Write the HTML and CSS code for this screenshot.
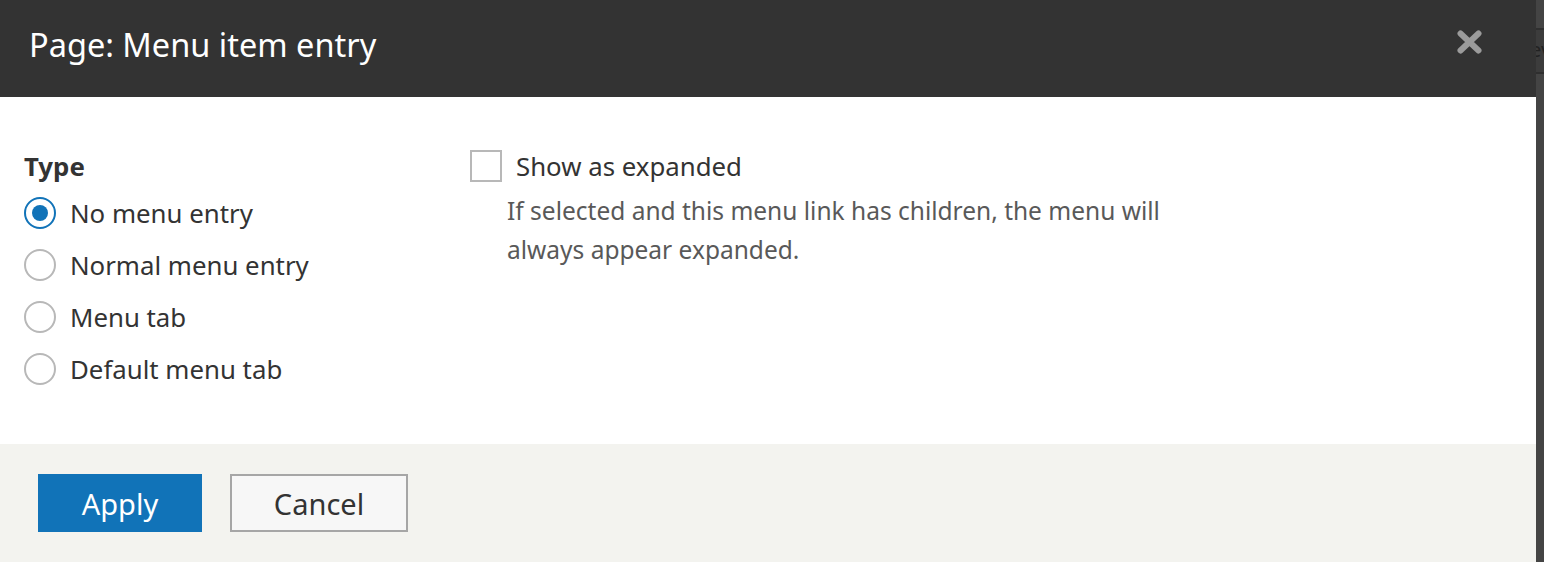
FILE: index.html
```html
<!DOCTYPE html>
<html lang="en">
<head>
<meta charset="utf-8">
<title>Page: Menu item entry</title>
<link rel="stylesheet" href="styles.css">
</head>
<body>
<div class="screen">
  <div class="dialog">
    <header class="dialog-header">
      <h1 class="dialog-title">Page: Menu item entry</h1>
      <button class="dialog-close" type="button" aria-label="Close">
        <svg width="25" height="24" viewBox="0 0 25 24"><path d="M3.5 3.5 L21.5 20.5 M21.5 3.5 L3.5 20.5" stroke="#9b9b9b" stroke-width="6" stroke-linecap="round"/></svg>
      </button>
    </header>
    <div class="dialog-body">
      <div class="col-type">
        <div class="field-label">Type</div>
        <label class="radio-row"><span class="radio checked"></span><span>No menu entry</span></label>
        <label class="radio-row"><span class="radio"></span><span>Normal menu entry</span></label>
        <label class="radio-row"><span class="radio"></span><span>Menu tab</span></label>
        <label class="radio-row"><span class="radio"></span><span>Default menu tab</span></label>
      </div>
      <div class="col-expand">
        <label class="check-row"><span class="checkbox"></span><span>Show as expanded</span></label>
        <div class="description">If selected and this menu link has children, the menu will<br>always appear expanded.</div>
      </div>
    </div>
    <footer class="dialog-footer">
      <button class="btn btn-primary" type="button">Apply</button>
      <button class="btn btn-secondary" type="button">Cancel</button>
    </footer>
  </div>
  <div class="side-strip">
    <div class="side-tab"><span class="side-text">ev</span></div>
  </div>
</div>
</body>
</html>
```
FILE: styles.css
```css
html, body {
  margin: 0;
  padding: 0;
  background: #444444;
}
body {
  font-family: "Noto Sans", "Open Sans", sans-serif;
  color: #333333;
}
.screen {
  display: flex;
  width: 1544px;
  height: 562px;
  overflow: hidden;
}
.dialog {
  width: 1536px;
  flex: none;
  display: flex;
  flex-direction: column;
  background: #ffffff;
}
.dialog-header {
  height: 97px;
  box-sizing: border-box;
  background: #333333;
  display: flex;
  align-items: flex-start;
  justify-content: space-between;
  padding: 23px 54px 0 29px;
}
.dialog-title {
  margin: 0;
  font-size: 32.5px;
  line-height: 44px;
  font-weight: 400;
  color: #ffffff;
}
.dialog-close {
  margin-top: 7px;
  padding: 0;
  border: 0;
  background: transparent;
  width: 25px;
  height: 24px;
  display: block;
}
.dialog-close svg { display: block; }
.dialog-body {
  flex: 1;
  display: flex;
  padding: 51px 0 0 24px;
  font-size: 25.8px;
}
.col-type {
  width: 446px;
  flex: none;
}
.field-label {
  font-weight: 700;
  line-height: 36px;
  margin-bottom: 3px;
}
.radio-row {
  display: flex;
  align-items: center;
  height: 52px;
  gap: 14px;
}
.radio {
  width: 32px;
  height: 32px;
  box-sizing: border-box;
  border: 2px solid #b8b8b8;
  border-radius: 50%;
  flex: none;
  position: relative;
}
.radio.checked {
  border-color: #1173b8;
}
.radio.checked::after {
  content: "";
  position: absolute;
  left: 6px;
  top: 6px;
  width: 16px;
  height: 16px;
  border-radius: 50%;
  background: #1173b8;
}
.col-expand {
  flex: 1;
}
.check-row {
  display: flex;
  align-items: center;
  height: 36px;
  gap: 14px;
}
.checkbox {
  width: 32px;
  height: 32px;
  box-sizing: border-box;
  border: 2px solid #b8b8b8;
  flex: none;
}
.description {
  margin: 7px 0 0 37px;
  font-size: 24.5px;
  line-height: 39px;
  color: #595959;
}
.dialog-footer {
  height: 118px;
  box-sizing: border-box;
  background: #f3f3ef;
  display: flex;
  align-items: flex-start;
  gap: 28px;
  padding: 30px 38px;
}
.btn {
  height: 58px;
  box-sizing: border-box;
  font-family: "Noto Sans", "Open Sans", sans-serif;
  font-size: 29px;
  border-radius: 0;
  padding: 0;
  cursor: pointer;
}
.btn-primary {
  width: 164px;
  background: #1173b8;
  color: #ffffff;
  border: 0;
}
.btn-secondary {
  width: 178px;
  background: #f7f7f7;
  color: #333333;
  border: 2px solid #a6a6a6;
}
.side-strip {
  width: 8px;
  flex: none;
  background: #444444;
  position: relative;
}
.side-tab {
  margin-top: 28px;
  height: 46px;
  border-top: 2px solid #2f2f2f;
  border-bottom: 2px solid #2f2f2f;
  background: #3c3c3c;
  overflow: hidden;
  box-sizing: border-box;
}
.side-text {
  display: block;
  margin-left: -6px;
  font-size: 20px;
  line-height: 40px;
  color: #222222;
}
```
